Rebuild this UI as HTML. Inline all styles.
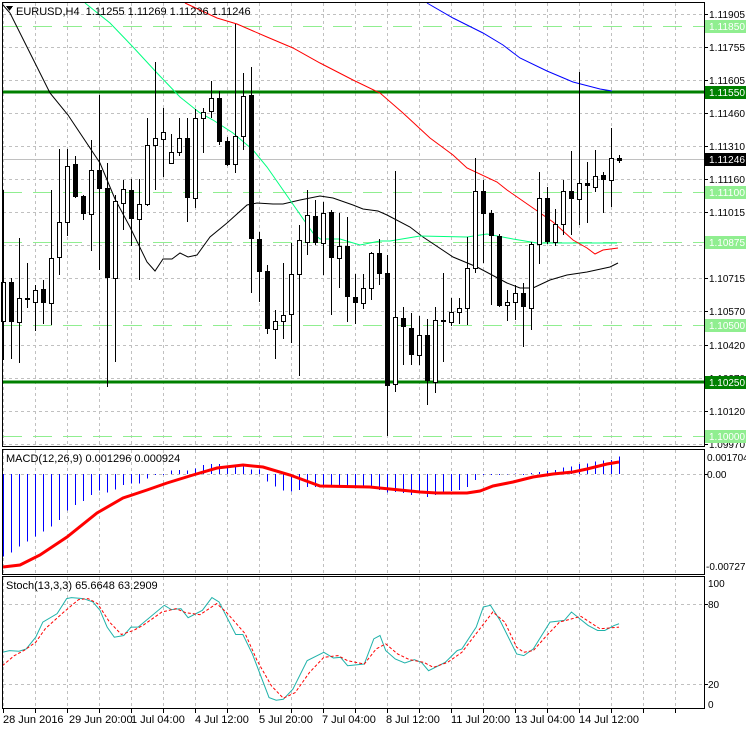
<!DOCTYPE html>
<html><head><meta charset="utf-8">
<style>
html,body{margin:0;padding:0;background:#fff;}
body{width:746px;height:731px;overflow:hidden;}
svg{display:block;}
text{font-family:"Liberation Sans",sans-serif;font-size:11px;}
.r text{font-size:10px;}
</style></head>
<body>
<svg id="s" width="746" height="731" xmlns="http://www.w3.org/2000/svg" shape-rendering="crispEdges">
<rect width="746" height="731" fill="#fff"/>
<g id="grid"></g>
<g id="lines"></g>
<g id="cand"></g>
<g id="frames" fill="none" stroke="#000" stroke-width="1">
<rect x="2.5" y="2.5" width="702" height="444"/>
<rect x="2.5" y="449.5" width="702" height="125"/>
<rect x="2.5" y="576.5" width="702" height="132"/>
</g>
<g id="labels" fill="#000">
<text x="16" y="15">EURUSD,H4&#160;&#160;1.11255 1.11269 1.11236 1.11246</text>
<polygon points="6,6 13,6 9.5,11" fill="#000"/>
<text x="6" y="462" font-size="10.5">MACD(12,26,9) 0.001296 0.000924</text>
<text x="6" y="589" font-size="10.5">Stoch(13,3,3) 65.6648 63.2909</text>
<g class="r">
<text x="709" y="18">1.11905</text>
<rect x="705" y="20" width="41" height="13" fill="#90ee90"/><text x="709" y="30" fill="#fff">1.11850</text>
<text x="709" y="51">1.11755</text>
<text x="709" y="84">1.11605</text>
<rect x="705" y="86" width="41" height="13" fill="#008000"/><text x="709" y="96" fill="#fff">1.11550</text>
<text x="709" y="117">1.11460</text>
<text x="709" y="150">1.11310</text>
<rect x="705" y="153" width="41" height="13" fill="#000"/><text x="709" y="163" fill="#fff">1.11246</text>
<text x="709" y="183">1.11160</text>
<rect x="705" y="186" width="41" height="13" fill="#90ee90"/><text x="709" y="196" fill="#fff">1.11100</text>
<text x="709" y="216">1.11015</text>
<rect x="705" y="236" width="41" height="13" fill="#90ee90"/><text x="709" y="246" fill="#fff">1.10875</text>
<text x="709" y="282">1.10715</text>
<text x="709" y="315">1.10570</text>
<rect x="705" y="319" width="41" height="13" fill="#90ee90"/><text x="709" y="329" fill="#fff">1.10500</text>
<text x="709" y="349">1.10420</text>
<text x="709" y="382">1.10270</text>
<rect x="705" y="376" width="41" height="13" fill="#008000"/><text x="709" y="386" fill="#fff">1.10250</text>
<text x="709" y="415">1.10120</text>
<text x="709" y="448">1.09970</text>
<rect x="705" y="430" width="41" height="13" fill="#90ee90"/><text x="709" y="440" fill="#fff">1.10000</text>
</g>
<g class="r">
<text x="707" y="461">0.001704</text>
<text x="707" y="478">0.00</text>
<text x="706" y="570">-0.007276</text>
<text x="708" y="587">100</text>
<text x="708" y="608">80</text>
<text x="708" y="688">20</text>
<text x="708" y="708">0</text>
</g>
<text x="3" y="723">28 Jun 2016</text>
<text x="69" y="723">29 Jun 20:00</text>
<text x="131" y="723">1 Jul 04:00</text>
<text x="195" y="723">4 Jul 12:00</text>
<text x="259" y="723">5 Jul 20:00</text>
<text x="322" y="723">7 Jul 04:00</text>
<text x="386" y="723">8 Jul 12:00</text>
<text x="451" y="723">11 Jul 20:00</text>
<text x="515" y="723">13 Jul 04:00</text>
<text x="579" y="723">14 Jul 12:00</text>
</g>
</svg>
<script>
document.querySelectorAll('.r text').forEach(function(t){if(t.textContent.length==7){t.setAttribute('textLength','36');t.setAttribute('lengthAdjust','spacingAndGlyphs');}});
var NS="http://www.w3.org/2000/svg";
function el(p,t,a){var e=document.createElementNS(NS,t);for(var k in a)e.setAttribute(k,a[k]);document.getElementById(p).appendChild(e);return e;}
var hy=[14,47,80,113,146,179,212,245,278,311,345,378,411,444];
for(var x=3.5;x<704;x+=32){
 el('grid','line',{x1:x,y1:3,x2:x,y2:446,stroke:'#c0c0c0','stroke-dasharray':'3,3'});
 el('grid','line',{x1:x,y1:450,x2:x,y2:574,stroke:'#c0c0c0','stroke-dasharray':'3,3'});
 el('grid','line',{x1:x,y1:577,x2:x,y2:708,stroke:'#c0c0c0','stroke-dasharray':'3,3'});
 el('grid','line',{x1:x,y1:709,x2:x,y2:713,stroke:'#000'});
}
hy.forEach(function(y){el('grid','line',{x1:3,y1:y+.5,x2:704,y2:y+.5,stroke:'#c0c0c0','stroke-dasharray':'3,3'});el('grid','line',{x1:704,y1:y+.5,x2:708,y2:y+.5,stroke:'#000'});});
[474,604,684].forEach(function(y){el('grid','line',{x1:3,y1:y+.5,x2:704,y2:y+.5,stroke:'#c0c0c0','stroke-dasharray':'3,3'});el('grid','line',{x1:704,y1:y+.5,x2:708,y2:y+.5,stroke:'#000'});});
[26,192,242,325,436].forEach(function(y){el('lines','line',{x1:3,y1:y+.5,x2:704,y2:y+.5,stroke:'#90ee90','stroke-dasharray':'19,11'});});
el('lines','line',{x1:3,y1:159.5,x2:704,y2:159.5,stroke:'#c0c0c0'});
[92,382].forEach(function(y){el('lines','rect',{x:3,y:y-1.5,width:701,height:3,fill:'#008000',stroke:'none'});});
function pl(pts,col,w,dash){var a={points:pts.map(function(p){return p.join(',')}).join(' '),fill:'none',stroke:col,'stroke-width':w,'shape-rendering':'auto'};if(dash)a['stroke-dasharray']=dash;el('lines','polyline',a);}
pl([[3,5],[10,13],[25,43],[50,93],[68,115],[100,163],[115,199],[130,227],[147,262],[155,271],[163,259],[172,259],[180,253],[188,257],[197,255],[210,237],[227,223],[247,205],[257,203],[273,204],[283,204],[300,200],[320,196],[333,198],[353,205],[363,209],[378,211],[387,215],[410,227],[423,237],[453,257],[477,267],[507,283],[520,288],[533,288],[550,280],[567,275],[587,272],[610,267],[618,263]],'#000',1);
pl([[85,3],[110,23],[133,47],[157,73],[180,97],[200,113],[213,120],[233,133],[253,150],[267,167],[290,200],[313,233],[320,239],[340,239],[360,245],[380,241],[390,241],[420,236],[467,237],[487,234],[513,239],[537,243],[553,243],[593,243],[607,243],[617,243]],'#00ff7f',1);
pl([[185,3],[217,18],[237,24],[267,37],[293,48],[320,63],[353,80],[380,93],[403,113],[430,138],[453,155],[467,168],[497,182],[507,190],[533,208],[553,222],[573,240],[587,248],[595,254],[603,250],[618,248]],'#ff0000',1);
pl([[427,3],[453,18],[483,33],[503,45],[520,58],[547,71],[573,82],[600,89],[612,91]],'#0000ff',1);
var C=[[190,360,321,282],[278,359,282,322],[238,363,322,298],[263,308,298,300],[285,331,302,290],[280,324,289,303],[190,325,303,258],[149,275,257,222],[149,236,222,166],[156,198,164,197],
[195,220,196,214],[140,251,214,170],[95,270,170,189],[163,387,188,278],[195,362,278,201],[180,230,203,189],[179,246,190,219],[179,280,219,204],[118,206,204,145],[62,190,145,138],
[108,177,139,132],[134,163,163,152],[118,156,152,138],[118,222,138,198],[109,208,198,118],[108,153,118,112],[81,118,111,98],[91,145,98,142],[137,166,141,165],[24,173,164,136],
[73,150,136,96],[67,293,95,239],[232,302,239,272],[265,334,271,329],[310,359,329,321],[263,339,321,315],[243,343,314,274],[225,376,274,240],[190,255,242,215],[200,245,216,243],
[202,275,243,213],[210,315,212,258],[213,288,258,246],[217,322,246,297],[274,324,297,303],[274,309,303,288],[252,300,288,253],[239,285,253,274],[255,436,273,386],[171,392,384,317],
[307,365,318,327],[313,365,328,355],[316,365,355,335],[319,405,335,381],[307,393,382,320],[273,362,321,320],[298,326,322,312],[298,324,312,308],[237,325,308,268],[158,273,268,191],
[180,263,191,214],[210,305,213,236],[234,307,236,306],[290,321,305,302],[285,320,302,293],[283,347,293,307],[242,330,308,244],[172,264,244,198],[187,244,198,242],[209,246,242,224],
[180,235,224,191],[151,235,191,199],[72,225,199,183],[162,223,183,186],[150,192,187,176],[172,213,175,180],[128,207,180,158],[155,163,158,161]];
C.forEach(function(c,i){var x=3.5+8*i;el('cand','line',{x1:x,y1:c[0],x2:x,y2:c[1],stroke:'#000'});
 var t=Math.min(c[2],c[3]),b=Math.max(c[2],c[3]);
 if(c[3]<=c[2]) el('cand','rect',{x:x-2,y:t+.5,width:4,height:Math.max(b-t,1),fill:'#fff',stroke:'#000'});
 else el('cand','rect',{x:x-2.5,y:t,width:5,height:Math.max(b-t,1),fill:'#000'});});
var M=[556.7,552.7,546.7,541.7,536.7,531.7,526.7,520,510.7,505,501,495,490.7,492.7,489.3,485,483.3,483.3,478.3,475,475,470.7,470,470.7,468.3,465,464,464,466,466,465,469.3,469.3,481.7,486.7,490.7,491.7,490,487,487,485,485,485,487,487,487,488,490,492.7,492,493,495,493,497,495,493,491,490,487,480,475,475,475,474.5,473.5,475,473,472,471,470,467.7,466.7,464,463.3,461.7,460.7,460,456.7];
M.forEach(function(v,i){var x=3.5+8*i;el('lines','line',{x1:x,y1:474,x2:x,y2:v,stroke:'#0000ff'});});
pl([[3,567],[20,565],[40,555],[67,537],[97,513],[123,498],[147,490],[167,483],[193,475],[217,468],[243,465],[263,467],[290,475],[320,486],[370,487],[400,490],[420,492],[437,493],[467,493],[480,491],[493,486],[513,482],[533,477],[553,474],[573,472],[587,469],[607,464],[619,462]],'#ff0000',3);
function cv(a){return a.map(function(p){return [p[0]/2.1,560+p[1]/2.98];});}
pl(cv([[5,275],[20,270],[40,272],[55,265],[75,230],[90,185],[120,160],[140,115],[150,112],[175,115],[195,125],[210,150],[225,200],[240,230],[260,225],[275,200],[290,200],[345,135],[360,148],[380,145],[395,172],[425,150],[445,112],[460,125],[495,222],[510,222],[530,280],[565,410],[580,418],[595,415],[615,385],[645,300],[680,275],[700,292],[715,290],[730,315],[765,310],[785,235],[798,225],[810,270],[830,295],[850,307],[870,297],[885,305],[900,330],[935,305],[960,270],[970,265],[1000,200],[1015,140],[1030,135],[1050,180],[1085,280],[1100,285],[1120,265],[1155,185],[1185,180],[1200,155],[1235,195],[1255,210],[1270,210],[1290,195],[1300,190]]),'#20b2aa',1);
pl(cv([[5,315],[30,285],[50,270],[75,245],[95,205],[130,160],[165,118],[185,115],[205,130],[230,185],[255,222],[280,210],[300,195],[340,155],[370,145],[390,157],[420,163],[455,130],[475,155],[515,220],[540,300],[570,375],[595,412],[620,395],[650,335],[680,290],[710,285],[730,300],[765,310],[790,265],[810,250],[835,280],[860,297],[890,305],[910,320],[940,305],[970,275],[1005,210],[1035,155],[1060,185],[1085,260],[1100,275],[1120,270],[1145,230],[1175,185],[1220,168],[1260,205],[1300,200]]),'#ff0000',1,'3,2');
</script>
</body></html>
